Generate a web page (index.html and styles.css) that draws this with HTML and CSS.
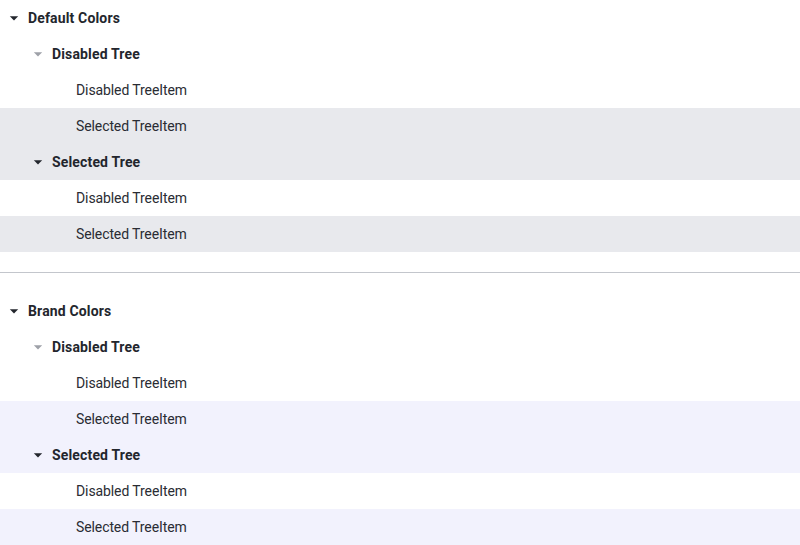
FILE: index.html
```html
<!DOCTYPE html>
<html>
<head>
<meta charset="utf-8">
<link rel="stylesheet" href="styles.css">
</head>
<body>
<div class="tree">
  <div class="row lvl0"><svg class="caret" viewBox="0 0 24 24"><path d="M7 10l5 5 5-5z"/></svg><span class="label bold">Default Colors</span></div>
  <div class="row lvl1"><svg class="caret dim" viewBox="0 0 24 24"><path d="M7 10l5 5 5-5z"/></svg><span class="label bold">Disabled Tree</span></div>
  <div class="row lvl2"><span class="label">Disabled TreeItem</span></div>
  <div class="row lvl2 sel-default"><span class="label">Selected TreeItem</span></div>
  <div class="row lvl1 sel-default"><svg class="caret" viewBox="0 0 24 24"><path d="M7 10l5 5 5-5z"/></svg><span class="label bold">Selected Tree</span></div>
  <div class="row lvl2"><span class="label">Disabled TreeItem</span></div>
  <div class="row lvl2 sel-default"><span class="label">Selected TreeItem</span></div>
</div>
<hr class="divider">
<div class="tree">
  <div class="row lvl0"><svg class="caret" viewBox="0 0 24 24"><path d="M7 10l5 5 5-5z"/></svg><span class="label bold">Brand Colors</span></div>
  <div class="row lvl1"><svg class="caret dim" viewBox="0 0 24 24"><path d="M7 10l5 5 5-5z"/></svg><span class="label bold">Disabled Tree</span></div>
  <div class="row lvl2"><span class="label">Disabled TreeItem</span></div>
  <div class="row lvl2 sel-brand"><span class="label">Selected TreeItem</span></div>
  <div class="row lvl1 sel-brand"><svg class="caret" viewBox="0 0 24 24"><path d="M7 10l5 5 5-5z"/></svg><span class="label bold">Selected Tree</span></div>
  <div class="row lvl2"><span class="label">Disabled TreeItem</span></div>
  <div class="row lvl2 sel-brand"><span class="label">Selected TreeItem</span></div>
</div>
</body>
</html>
```
FILE: styles.css
```css
html, body {
  margin: 0;
  padding: 0;
  background: #ffffff;
}
body {
  font-family: Roboto, "Noto Sans", sans-serif;
  font-size: 14px;
  color: #2a2c33;
}
.tree {
  display: flex;
  flex-direction: column;
}
.row {
  height: 36px;
  display: flex;
  align-items: center;
  box-sizing: border-box;
}
.lvl0 { padding-left: 4px; }
.lvl1 { padding-left: 28px; }
.lvl2 { padding-left: 76px; }
.caret {
  width: 20px;
  height: 20px;
  fill: #23262d;
  margin-right: 4px;
  flex: none;
}
.caret.dim {
  fill: #9ea1a8;
}
.label {
  line-height: 20px;
  white-space: nowrap;
  letter-spacing: -0.1px;
}
.bold {
  font-weight: 700;
  color: #23262d;
  letter-spacing: 0.15px;
}
.sel-default {
  background: #e8e9ed;
}
.sel-brand {
  background: #f2f2fd;
}
.divider {
  margin: 20px 0;
  border: 0;
  height: 1px;
  background: #c3c6cc;
}
```
